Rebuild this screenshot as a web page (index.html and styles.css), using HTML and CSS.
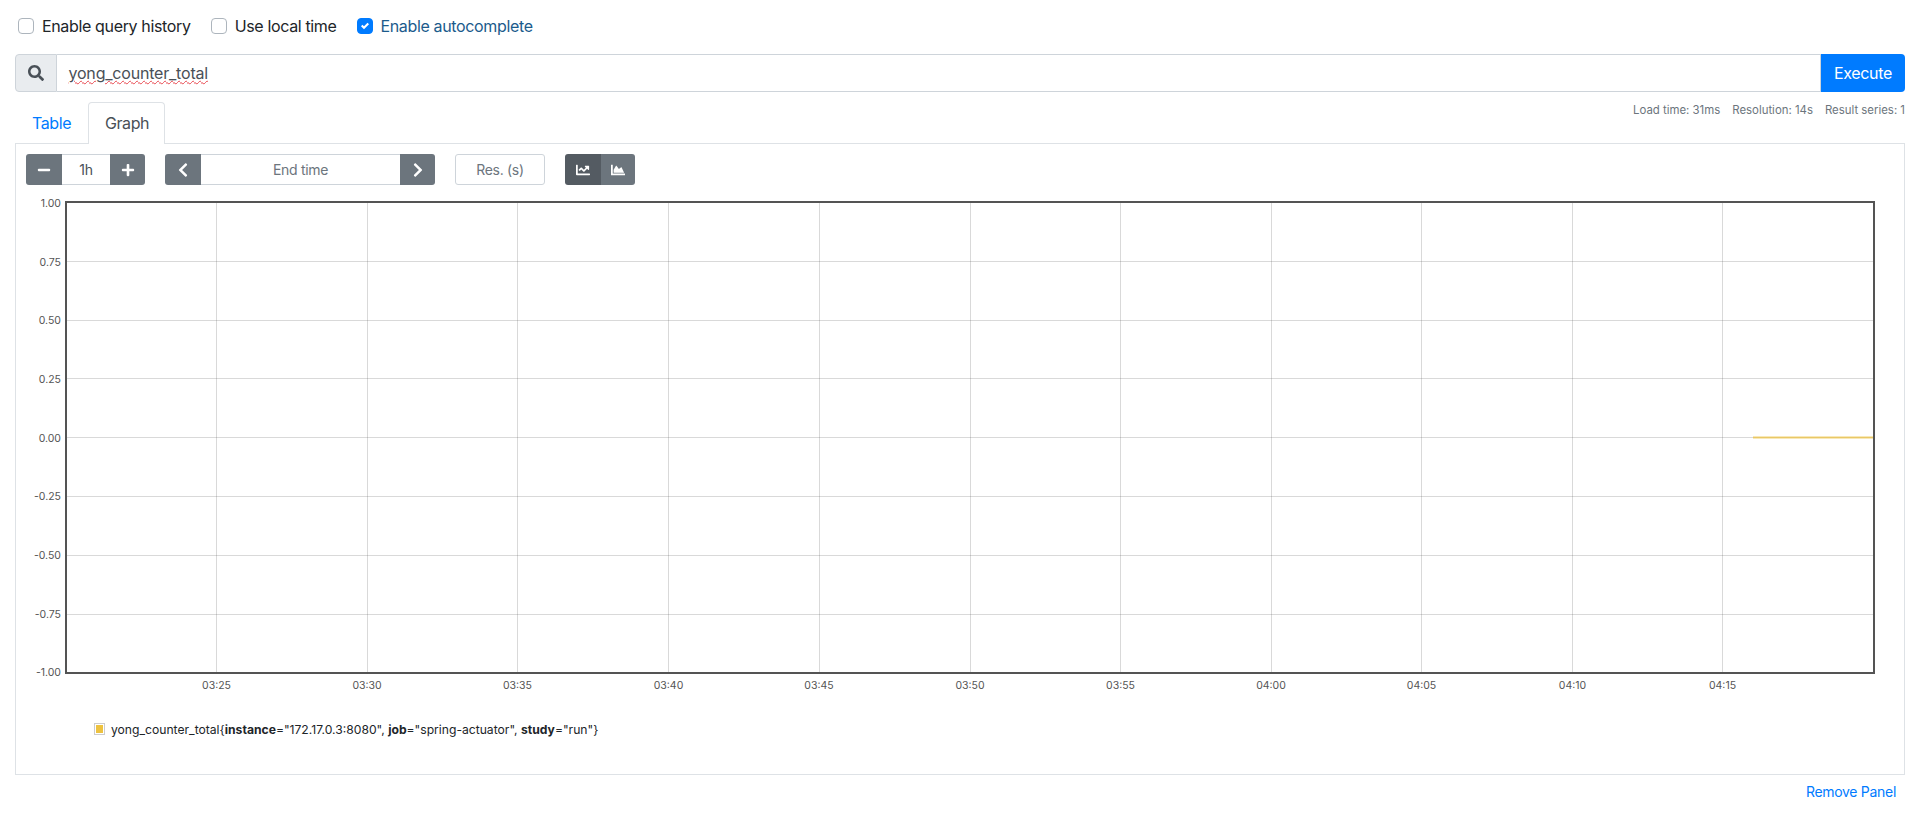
FILE: index.html
```html
<!DOCTYPE html>
<html lang="en">
<head>
<meta charset="utf-8">
<title>Prometheus Time Series Collection and Processing Server</title>
<link rel="stylesheet" href="styles.css">
</head>
<body>
<main class="page">
  <div class="options">
    <label class="check"><span class="box"></span><span>Enable query history</span></label>
    <label class="check"><span class="box"></span><span>Use local time</span></label>
    <label class="check check-on"><span class="box box-on"><svg viewBox="0 0 8 8" class="tick"><path d="M6.564.75l-3.59 3.612-1.538-1.55L0 4.26 2.974 7.25 8 2.193z"/></svg></span><span>Enable autocomplete</span></label>
  </div>

  <div class="query">
    <div class="query-icon"><svg viewBox="0 0 512 512" class="icon-search"><path d="M505 442.7L405.3 343c-4.5-4.5-10.6-7-17-7H372c27.6-35.3 44-79.7 44-128C416 93.1 322.9 0 208 0S0 93.1 0 208s93.1 208 208 208c48.3 0 92.7-16.4 128-44v16.3c0 6.4 2.5 12.5 7 17l99.7 99.7c9.4 9.4 24.6 9.4 33.9 0l28.3-28.3c9.4-9.4 9.4-24.6.1-34zM208 336c-70.7 0-128-57.2-128-128 0-70.7 57.2-128 128-128 70.7 0 128 57.2 128 128 0 70.7-57.2 128-128 128z"/></svg></div>
    <div class="query-input"><span class="query-text">yong_counter_total</span></div>
    <button class="execute">Execute</button>
  </div>

  <div class="tabs-row">
    <div class="tabs">
      <a class="tab">Table</a>
      <a class="tab tab-active">Graph</a>
    </div>
    <div class="stats">
      <span>Load time: 31ms</span>
      <span>Resolution: 14s</span>
      <span>Result series: 1</span>
    </div>
  </div>

  <section class="panel">
    <div class="controls">
      <div class="group">
        <button class="btn btn-range"><svg viewBox="0 0 448 512" class="icon"><path d="M416 208H32c-17.67 0-32 14.33-32 32v32c0 17.67 14.33 32 32 32h384c17.67 0 32-14.33 32-32v-32c0-17.67-14.33-32-32-32z"/></svg></button>
        <div class="field field-range">1h</div>
        <button class="btn btn-plus"><svg viewBox="0 0 448 512" class="icon"><path d="M416 208H272V64c0-17.67-14.33-32-32-32h-32c-17.67 0-32 14.33-32 32v144H32c-17.67 0-32 14.33-32 32v32c0 17.67 14.33 32 32 32h144v144c0 17.67 14.33 32 32 32h32c17.67 0 32-14.33 32-32V304h144c17.67 0 32-14.33 32-32v-32c0-17.67-14.33-32-32-32z"/></svg></button>
      </div>
      <div class="group group-time">
        <button class="btn btn-range"><svg viewBox="0 0 320 512" class="icon icon-chev"><path d="M34.52 239.03L228.87 44.69c9.37-9.37 24.57-9.37 33.94 0l22.67 22.67c9.36 9.36 9.37 24.52.04 33.9L131.49 256l154.02 154.75c9.34 9.38 9.32 24.54-.04 33.9l-22.67 22.67c-9.37 9.37-24.57 9.37-33.94 0L34.52 272.97c-9.37-9.37-9.37-24.57 0-33.94z"/></svg></button>
        <div class="field field-time">End time</div>
        <button class="btn btn-plus"><svg viewBox="0 0 320 512" class="icon icon-chev"><path d="M285.476 272.971L91.132 467.314c-9.373 9.373-24.569 9.373-33.941 0l-22.667-22.667c-9.357-9.357-9.375-24.522-.04-33.901L188.505 256 34.484 101.255c-9.335-9.379-9.317-24.544.04-33.901l22.667-22.667c9.373-9.373 24.569-9.373 33.941 0L285.475 239.03c9.373 9.372 9.373 24.568.001 33.941z"/></svg></button>
      </div>
      <div class="field field-res">Res. (s)</div>
      <div class="group group-chart">
        <button class="btn btn-chart btn-dark"><svg viewBox="0 0 512 512" class="icon"><path d="M496 384H64V80c0-8.84-7.16-16-16-16H16C7.16 64 0 71.16 0 80v336c0 17.67 14.33 32 32 32h464c8.84 0 16-7.16 16-16v-32c0-8.84-7.16-16-16-16zM464 96H345.94c-21.38 0-32.09 25.85-16.97 40.97l32.4 32.4L288 242.75l-73.37-73.37c-12.5-12.5-32.76-12.5-45.25 0l-68.69 68.69c-6.25 6.25-6.25 16.38 0 22.63l22.62 22.62c6.25 6.25 16.38 6.25 22.63 0L192 237.25l73.37 73.37c12.5 12.5 32.76 12.5 45.25 0l96-96 32.4 32.4c15.12 15.12 40.97 4.41 40.97-16.97V112c.01-8.84-7.15-16-16-16z"/></svg></button>
        <button class="btn btn-chart btn-last"><svg viewBox="0 0 512 512" class="icon"><path d="M500 384c6.6 0 12 5.4 12 12v40c0 6.6-5.4 12-12 12H12c-6.6 0-12-5.4-12-12V76c0-6.6 5.4-12 12-12h40c6.6 0 12 5.4 12 12v308h436zM372.7 159.5L288 216l-85.3-113.7c-5.1-6.8-15.5-6.3-19.9 1L96 248v104h384l-89.9-187.8c-3.2-6.5-11.4-8.7-17.4-4.7z"/></svg></button>
      </div>
    </div>

    <svg class="chart" viewBox="16 194 1888 500" width="1888" height="500">
      <g class="grid">
        <path d="M66 261.500H1874M66 320.500H1874M66 378.500H1874M66 437.500H1874M66 496.500H1874M66 555.500H1874M66 614.500H1874"/>
        <path d="M216.500 202V673M367.500 202V673M517.500 202V673M668.500 202V673M819.500 202V673M970.500 202V673M1120.500 202V673M1271.500 202V673M1421.500 202V673M1572.500 202V673M1722.500 202V673"/>
      </g>
      <path class="series" d="M1753 437.500H1874"/>
      <rect class="frame" x="66" y="202" width="1808" height="471"/>
      <g class="y-labels">
        <text x="61" y="207">1.00</text>
        <text x="61" y="266">0.75</text>
        <text x="61" y="324">0.50</text>
        <text x="61" y="383">0.25</text>
        <text x="61" y="442">0.00</text>
        <text x="61" y="500">-0.25</text>
        <text x="61" y="559">-0.50</text>
        <text x="61" y="618">-0.75</text>
        <text x="61" y="676">-1.00</text>
      </g>
      <g class="x-labels">
        <text x="216.500" y="689">03:25</text>
        <text x="367" y="689">03:30</text>
        <text x="517.500" y="689">03:35</text>
        <text x="668.500" y="689">03:40</text>
        <text x="819" y="689">03:45</text>
        <text x="970" y="689">03:50</text>
        <text x="1120.500" y="689">03:55</text>
        <text x="1271" y="689">04:00</text>
        <text x="1421.500" y="689">04:05</text>
        <text x="1572.500" y="689">04:10</text>
        <text x="1722.500" y="689">04:15</text>
      </g>
    </svg>

    <div class="legend">
      <span class="swatch"><span class="swatch-fill"></span></span>
      <span class="legend-text">yong_counter_total{<b>instance</b>="172.17.0.3:8080", <b>job</b>="spring-actuator", <b>study</b>="run"}</span>
    </div>
  </section>

  <div class="remove"><a class="remove-link">Remove Panel</a></div>
</main>
</body>
</html>
```
FILE: styles.css
```css
* { box-sizing: border-box; }
html, body { margin: 0; padding: 0; background: #fff; }
body { font-family: Inter, "Liberation Sans", sans-serif; font-size: 16px; color: #212529; overflow: hidden; }
button { font: inherit; border: 0; padding: 0; margin: 0; }
.page { width: 1916px; height: 815px; padding: 0 11px 0 15px; }

.options { display: flex; height: 54px; padding: 16px 0 0 3px; align-items: flex-start; letter-spacing: -0.35px; }
.check { display: flex; align-items: center; height: 20px; margin-right: 20px; line-height: 20px; }
.check-on { color: #1b5b8c; }
.box { width: 16px; height: 16px; margin-right: 8px; border: 1px solid #adb5bd; border-radius: 4px; background: #fff; display: flex; align-items: center; justify-content: center; }
.box-on { background: #007bff; border-color: #007bff; }
.tick { width: 8px; height: 8px; fill: #fff; }

.query { display: flex; height: 38px; width: 1890px; }
.query-icon { width: 42px; background: #e9ecef; border: 1px solid #ced4da; border-radius: 4px 0 0 4px; display: flex; align-items: center; justify-content: center; }
.icon-search { width: 16px; height: 16px; fill: #495057; }
.query-input { flex: 1; border: 1px solid #ced4da; border-left: 0; padding-left: 11.500px; display: flex; align-items: center; color: #495057; letter-spacing: -0.2px; }
.query-text { text-decoration: underline wavy #e8484f 1px; text-underline-offset: 1px; }
.execute { width: 84px; background: #007bff; color: #fff; border-radius: 0 4px 4px 0; letter-spacing: -0.35px; }

.tabs-row { display: flex; justify-content: space-between; height: 51px; width: 1890px; padding-top: 10px; }
.tabs { display: flex; }
.tab { display: flex; align-items: center; height: 41px; width: 73px; padding-left: 17px; color: #007bff; letter-spacing: -0.42px; }
.tab-active { width: 77px; padding-left: 16px; padding-bottom: 1px; color: #495057; background: #fff; border: 1px solid #dee2e6; border-bottom: 0; border-radius: 4px 4px 0 0; height: 42px; position: relative; z-index: 1; }
.stats { display: flex; gap: 12px; font-size: 11.400px; line-height: 16px; color: #6c757d; }

.panel { width: 1890px; height: 632px; border: 1px solid #dee2e6; }
.controls { display: flex; height: 50px; padding: 10px 0 0 10px; align-items: flex-start; font-size: 14px; letter-spacing: -0.3px; }
.group { display: flex; height: 31px; }
.group-time { margin-left: 20px; }
.group-chart { margin-left: 20px; }
.btn { display: flex; align-items: center; justify-content: center; height: 31px; background: #6c757d; color: #fff; }
.btn-range { width: 36px; }
.btn-plus { width: 35px; }
.group > .btn:first-child { border-radius: 3px 0 0 3px; }
.group > .btn:last-child { border-radius: 0 3px 3px 0; }
.btn-chart { width: 36px; }
.btn-last { width: 34px; }
.btn-dark { background: #545b62; }
.icon { width: 14px; height: 14px; fill: #fff; }
.icon-chev { width: 10px; height: 16px; }
.field { height: 31px; display: flex; align-items: center; justify-content: center; color: #495057; border-top: 1px solid #ced4da; border-bottom: 1px solid #ced4da; }
.field-range { width: 48px; }
.field-time { width: 199px; color: #6c757d; }
.field-res { width: 90px; margin-left: 20px; border: 1px solid #ced4da; border-radius: 3px; color: #6c757d; }

.chart { display: block; }
.grid path { fill: none; stroke: #545454; stroke-opacity: 0.22; stroke-width: 1; }
.series { fill: none; stroke: #edc240; stroke-opacity: 0.75; stroke-width: 2; }
.frame { fill: none; stroke: #545454; stroke-width: 2; }
.y-labels, .x-labels { font-size: 10.500px; fill: #545454; }
.y-labels { text-anchor: end; }
.x-labels { text-anchor: middle; }

.legend { display: flex; align-items: center; height: 20px; margin-top: 25px; padding-left: 78px; font-size: 12.150px; color: #212529; }
.swatch { width: 11px; height: 12px; border: 1px solid #ccc; padding: 1px; margin-right: 6px; display: block; }
.swatch-fill { display: block; width: 100%; height: 100%; background: #edc240; }
.legend-text b { font-weight: 700; }

.remove { display: flex; justify-content: flex-end; width: 1881px; margin-top: 7px; }
.remove-link { color: #007bff; font-size: 14px; line-height: 20px; letter-spacing: -0.3px; }
```
